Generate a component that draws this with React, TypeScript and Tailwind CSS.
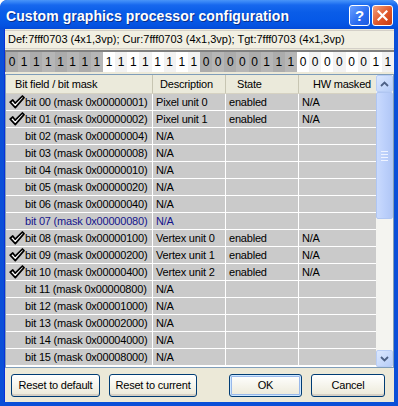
import React from "react";

const bits = "01111111111111110000011100000011".split("");

type Row = { n: string; mask: string; desc: string; state: string; hw: string; check: boolean; blue?: boolean };

const rows: Row[] = Array.from({ length: 16 }, (_, i) => {
  const n = i.toString().padStart(2, "0");
  const mask = "0x" + (1 << i).toString(16).toUpperCase().padStart(8, "0");
  let desc = "N/A", state = "", hw = "", check = false;
  if (i === 0 || i === 1) { desc = `Pixel unit ${i}`; state = "enabled"; hw = "N/A"; check = true; }
  if (i >= 8 && i <= 10) { desc = `Vertex unit ${i - 8}`; state = "enabled"; hw = "N/A"; check = true; }
  return { n, mask, desc, state, hw, check, blue: i === 7 };
});

function Check() {
  return (
    <svg width="16" height="14" viewBox="0 0 16 14" className="shrink-0">
      <path d="M1.2 7.2 L3.8 5 L6.2 8.2 L13.4 1 L15 2.6 L6.3 12.6 Z" fill="#fff" stroke="#000" strokeWidth="1.7" strokeLinejoin="round" />
    </svg>
  );
}

function XPButton({ label, w, def }: { label: string; w: string; def?: boolean }) {
  return (
    <div className={`${w} h-[23px] rounded-[3px] border border-[#003c74] bg-gradient-to-b from-[#ffffff] to-[#ece9d8] flex items-center justify-center ${def ? "shadow-[inset_0_0_0_1px_#cee7ff,inset_0_0_0_2px_#98b8ea]" : "shadow-[inset_0_-2px_0_#d6d0c5]"}`}>
      <span className="text-[11px] text-black tracking-[-0.2px]">{label}</span>
    </div>
  );
}

export default function App() {
  return (
    <div className="w-[398px] h-[406px] overflow-hidden bg-[#0a4fd8] rounded-t-[7px] flex flex-col" style={{ fontFamily: '"Liberation Sans", Arial, sans-serif' }}>
      {/* Title bar */}
      <div className="h-[29px] shrink-0 flex items-center pl-[6px] pr-[5px] rounded-t-[7px] bg-[linear-gradient(to_bottom,#4a95f8_0px,#3584f6_2px,#1768ee_5px,#0a5de8_12px,#0659e7_20px,#0452e0_26px,#044ad7_29px)]">
        <span className="text-white font-bold text-[14px] tracking-[0.1px] [text-shadow:1px_1px_0_#0a2f8a] flex-1 mt-[3px]">Custom graphics processor configuration</span>
        <div className="flex gap-[2px] mt-[1px]">
          <div className="w-[21px] h-[21px] rounded-[3px] border border-white bg-[linear-gradient(135deg,#6aa0ff,#2a6cf0_60%,#1d5ae0)] flex items-center justify-center">
            <span className="text-white font-bold text-[15px] leading-none">?</span>
          </div>
          <div className="w-[21px] h-[21px] rounded-[3px] border border-white bg-[linear-gradient(135deg,#f3a27f,#e0572a_55%,#c63c12)] flex items-center justify-center">
            <svg width="11" height="11" viewBox="0 0 11 11"><path d="M1.5 1.5 L9.5 9.5 M9.5 1.5 L1.5 9.5" stroke="#fff" strokeWidth="2.2" strokeLinecap="square" /></svg>
          </div>
        </div>
      </div>

      {/* Client */}
      <div className="flex-1 mx-[4px] mb-[4px] bg-[#ece9d8] flex flex-col border-l border-[#0831d9]">
        {/* Def row */}
        <div className="h-[19px] mt-[1px] border-t border-[#d4d0c8] border-b border-[#bdbab0] bg-[#f1efe2] flex items-center pl-[3px]">
          <span className="text-[11px] text-black whitespace-nowrap">Def:7fff0703 (4x1,3vp); Cur:7fff0703 (4x1,3vp); Tgt:7fff0703 (4x1,3vp)</span>
        </div>
        {/* Bit row */}
        <div className="h-[22px] mt-[1px] border-t-2 border-l border-[#808080] flex">
          {bits.map((b, i) => {
            const g = Math.floor(i / 8);
            const odd = i % 2 === 1;
            const cls = g % 2 === 0 ? (odd ? "bg-[#b6b6b6]" : "bg-[#acacac]") : (odd ? "bg-[#f2f2f2]" : "bg-[#ffffff]");
            return (
              <div key={i} className={`flex-1 ${cls} flex items-center justify-center text-[12px] text-black`}>{b}</div>
            );
          })}
        </div>

        {/* List view */}
        <div className="mt-[2px] h-[294px] border border-[#7f9db9] bg-white flex">
          <div className="flex-1 flex flex-col">
            {/* header */}
            <div className="h-[19px] bg-[#ebeadb] border-b border-[#d6d2c2] flex text-[11px] tracking-[-0.2px] text-black">
              <div className="w-[147px] pl-[9px] flex items-center border-r border-[#c7c5b2]">Bit field / bit mask</div>
              <div className="w-[73px] pl-[7px] flex items-center border-r border-[#c7c5b2]">Description</div>
              <div className="w-[73px] pl-[11px] flex items-center border-r border-[#c7c5b2]">State</div>
              <div className="flex-1 pr-[5px] flex items-center justify-end">HW masked</div>
            </div>
            {rows.map((r) => (
              <div key={r.n} className={`h-[17px] shrink-0 bg-[#cacaca] border-b border-white flex text-[11px] tracking-[-0.2px] ${r.blue ? "text-[#14148c]" : "text-black"}`}>
                <div className="w-[147px] border-r border-white flex items-center pl-[3px]">
                  <div className="w-[16px] flex items-center">{r.check && <Check />}</div>
                  <span className="whitespace-nowrap">bit {r.n} (mask {r.mask})</span>
                </div>
                <div className="w-[73px] border-r border-white flex items-center pl-[3px] whitespace-nowrap overflow-hidden">{r.desc}</div>
                <div className="w-[73px] border-r border-white flex items-center pl-[3px]">{r.state}</div>
                <div className="flex-1 flex items-center pl-[3px]">{r.hw}</div>
              </div>
            ))}
          </div>
          {/* scrollbar */}
          <div className="w-[17px] bg-[#f4f4f0] flex flex-col">
            <div className="h-[17px] rounded-[2px] border border-[#b8cdf6] bg-gradient-to-br from-[#dce8fe] to-[#b6cdf8] flex items-center justify-center">
              <svg width="9" height="6" viewBox="0 0 9 6"><path d="M1 5 L4.5 1.5 L8 5" stroke="#4d6185" strokeWidth="1.8" fill="none" /></svg>
            </div>
            <div className="h-[127px] mt-0 rounded-[2px] border border-[#b0c6f2] bg-gradient-to-r from-[#c9dafd] via-[#bcd0fb] to-[#b1c7f6] flex flex-col items-center justify-center gap-[2px]">
              <div className="w-[7px] h-[1px] bg-[#eef3ff]" />
              <div className="w-[7px] h-[1px] bg-[#eef3ff]" />
              <div className="w-[7px] h-[1px] bg-[#eef3ff]" />
              <div className="w-[7px] h-[1px] bg-[#eef3ff]" />
            </div>
            <div className="flex-1" />
            <div className="h-[17px] rounded-[2px] border border-[#b8cdf6] bg-gradient-to-br from-[#dce8fe] to-[#b6cdf8] flex items-center justify-center">
              <svg width="9" height="6" viewBox="0 0 9 6"><path d="M1 1 L4.5 4.5 L8 1" stroke="#4d6185" strokeWidth="1.8" fill="none" /></svg>
            </div>
          </div>
        </div>

        {/* buttons */}
        <div className="flex-1 flex items-center pl-[6px] pr-[9px]">
          <XPButton label="Reset to default" w="w-[89px]" />
          <div className="w-[9px]" />
          <XPButton label="Reset to current" w="w-[88px]" />
          <div className="flex-1" />
          <XPButton label="OK" w="w-[73px]" def />
          <div className="w-[9px]" />
          <XPButton label="Cancel" w="w-[74px]" />
        </div>
      </div>
    </div>
  );
}
